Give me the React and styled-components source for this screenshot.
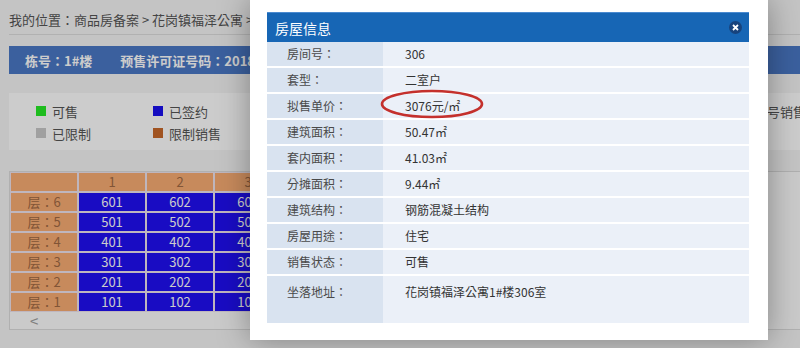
import React from "react";
import styled, { createGlobalStyle } from "styled-components";

const GlobalStyle = createGlobalStyle`
  html, body {
    margin: 0;
    padding: 0;
  }
  body {
    width: 800px;
    height: 348px;
    overflow: hidden;
    background: #f6f6f6;
    font-family: "Noto Sans CJK TC", "Noto Sans CJK SC", "Noto Sans", sans-serif;
  }
`;

const Screen = styled.div`
  position: relative;
  width: 800px;
  height: 348px;
  overflow: hidden;
`;

const Page = styled.div`
  display: flex;
  flex-direction: column;
  width: 1000px;
  padding-left: 9px;
`;

const Breadcrumb = styled.div`
  padding: 10px 0 4px;
  line-height: 20px;
  font-size: 13px;
  color: #555;
  border-bottom: 1px solid #dedede;
`;

const InfoBar = styled.div`
  display: flex;
  align-items: center;
  height: 28px;
  margin-top: 11px;
  padding-left: 16px;
  background: #4a78c6;
  color: #fff;
  font-size: 13px;
  font-weight: bold;
  gap: 28px;
`;

const LegendPanel = styled.div`
  display: grid;
  grid-template-columns: repeat(7, 117px);
  grid-auto-rows: 22px;
  margin-top: 19px;
  padding: 7px 0 6px 27px;
  background: #fff;
`;

const LegendItem = styled.div`
  display: flex;
  align-items: center;
  font-size: 13px;
  color: #555;
`;

const Swatch = styled.span`
  width: 10px;
  height: 10px;
  margin-right: 6px;
  background: ${(p) => p.$color};
`;

const TableWrap = styled.div`
  margin-top: 21px;
  border: 1px solid #dcdcdc;
  border-right: none;
  background: #fdfdfd;
`;

const FloorGrid = styled.div`
  display: grid;
  grid-template-columns: repeat(7, 66px);
  grid-auto-rows: 18px;
  gap: 2px;
  padding: 1px;
  width: max-content;
  background: #efe4ee;
`;

const Cell = styled.div`
  font-size: 13px;
  line-height: 18px;
  text-align: center;
  background: ${(p) => (p.$unit ? "#200ff4" : "#f9ad74")};
  color: ${(p) => (p.$unit ? "#fff" : "#a26a44")};
`;

const ScrollTrack = styled.div`
  height: 17px;
  padding-left: 20px;
  font-size: 15px;
  line-height: 17px;
  color: #a0a0a0;
`;

const Shade = styled.div`
  position: absolute;
  inset: 0;
  background: rgba(0, 0, 0, 0.2);
`;

const Modal = styled.div`
  position: absolute;
  left: 250px;
  top: 0;
  width: 518px;
  height: 340px;
  box-sizing: border-box;
  padding: 12px 19px 17px 17px;
  background: #fff;
  box-shadow: 0 0 30px rgba(0, 0, 0, 0.35);
`;

const ModalHeader = styled.div`
  display: flex;
  align-items: center;
  justify-content: space-between;
  height: 30px;
  padding: 0 7px 0 8px;
  background: #1766b5;
  border-top: 1px solid #4a8ad0;
  box-sizing: border-box;
`;

const Title = styled.span`
  font-size: 14px;
  color: #fff;
`;

const CloseButton = styled.span`
  display: flex;
  align-items: center;
  justify-content: center;
  width: 13px;
  height: 13px;
  border-radius: 50%;
  background: #17437d;
`;

const InfoRow = styled.div`
  display: grid;
  grid-template-columns: 116px 1fr;
  height: ${(p) => (p.$tall ? "47px" : "24px")};
  border-bottom: ${(p) => (p.$tall ? "none" : "2px solid #fff")};
  font-size: 12px;
`;

const Label = styled.div`
  display: flex;
  align-items: ${(p) => (p.$tall ? "flex-start" : "center")};
  padding: ${(p) => (p.$tall ? "7px 0 0 20px" : "0 0 0 20px")};
  line-height: 18px;
  background: #d9e3f0;
  color: #4a4a4a;
`;

const Value = styled.div`
  display: flex;
  align-items: ${(p) => (p.$tall ? "flex-start" : "center")};
  padding: ${(p) => (p.$tall ? "7px 0 0 22px" : "0 0 0 22px")};
  line-height: 18px;
  background: #ebf0f8;
  color: #333;
`;

const Circle = styled.svg`
  position: absolute;
  left: 130px;
  top: 89px;
`;

const legend = [
  ["可售", "#26ec26"],
  ["已签约", "#1a0ff0"],
  ["", null],
  ["", null],
  ["", null],
  ["", null],
  ["限号销售", "#c8c8c8"],
  ["已限制", "#c8c8c8"],
  ["限制销售", "#c8682a"],
];

const floors = [6, 5, 4, 3, 2, 1];
const units = [1, 2, 3, 4, 5, 6];

const info = [
  ["房间号：", "306"],
  ["套型：", "二室户"],
  ["拟售单价：", "3076元/㎡"],
  ["建筑面积：", "50.47㎡"],
  ["套内面积：", "41.03㎡"],
  ["分摊面积：", "9.44㎡"],
  ["建筑结构：", "钢筋混凝土结构"],
  ["房屋用途：", "住宅"],
  ["销售状态：", "可售"],
  ["坐落地址：", "花岗镇福泽公寓1#楼306室"],
];

export default function App() {
  return (
    <Screen>
      <GlobalStyle />
      <Page>
        <Breadcrumb>我的位置：商品房备案 &gt; 花岗镇福泽公寓 &gt; 1#楼</Breadcrumb>
        <InfoBar>
          <span>栋号：1#楼</span>
          <span>预售许可证号码：2018060</span>
        </InfoBar>
        <LegendPanel>
          {legend.map(([text, color], i) => (
            <LegendItem key={i}>
              {color && <Swatch $color={color} />}
              {text}
            </LegendItem>
          ))}
        </LegendPanel>
        <TableWrap>
          <FloorGrid>
            <Cell />
            {units.map((u) => (
              <Cell key={u}>{u}</Cell>
            ))}
            {floors.map((f) => (
              <React.Fragment key={f}>
                <Cell>层：{f}</Cell>
                {units.map((u) => (
                  <Cell key={u} $unit>
                    {f}0{u}
                  </Cell>
                ))}
              </React.Fragment>
            ))}
          </FloorGrid>
          <ScrollTrack>&lt;</ScrollTrack>
        </TableWrap>
      </Page>
      <Shade />
      <Modal>
        <ModalHeader>
          <Title>房屋信息</Title>
          <CloseButton>
            <svg width="7" height="7" viewBox="0 0 7 7">
              <path d="M1 1L6 6M6 1L1 6" stroke="#fff" strokeWidth="1.8" />
            </svg>
          </CloseButton>
        </ModalHeader>
        {info.map(([label, value], i) => {
          const tall = i === info.length - 1;
          return (
            <InfoRow key={label} $tall={tall}>
              <Label $tall={tall}>{label}</Label>
              <Value $tall={tall}>{value}</Value>
            </InfoRow>
          );
        })}
        <Circle width="104" height="30" viewBox="0 0 104 30">
          <ellipse cx="52" cy="15" rx="50" ry="13" fill="none" stroke="#c4302c" strokeWidth="2.6" />
        </Circle>
      </Modal>
    </Screen>
  );
}
